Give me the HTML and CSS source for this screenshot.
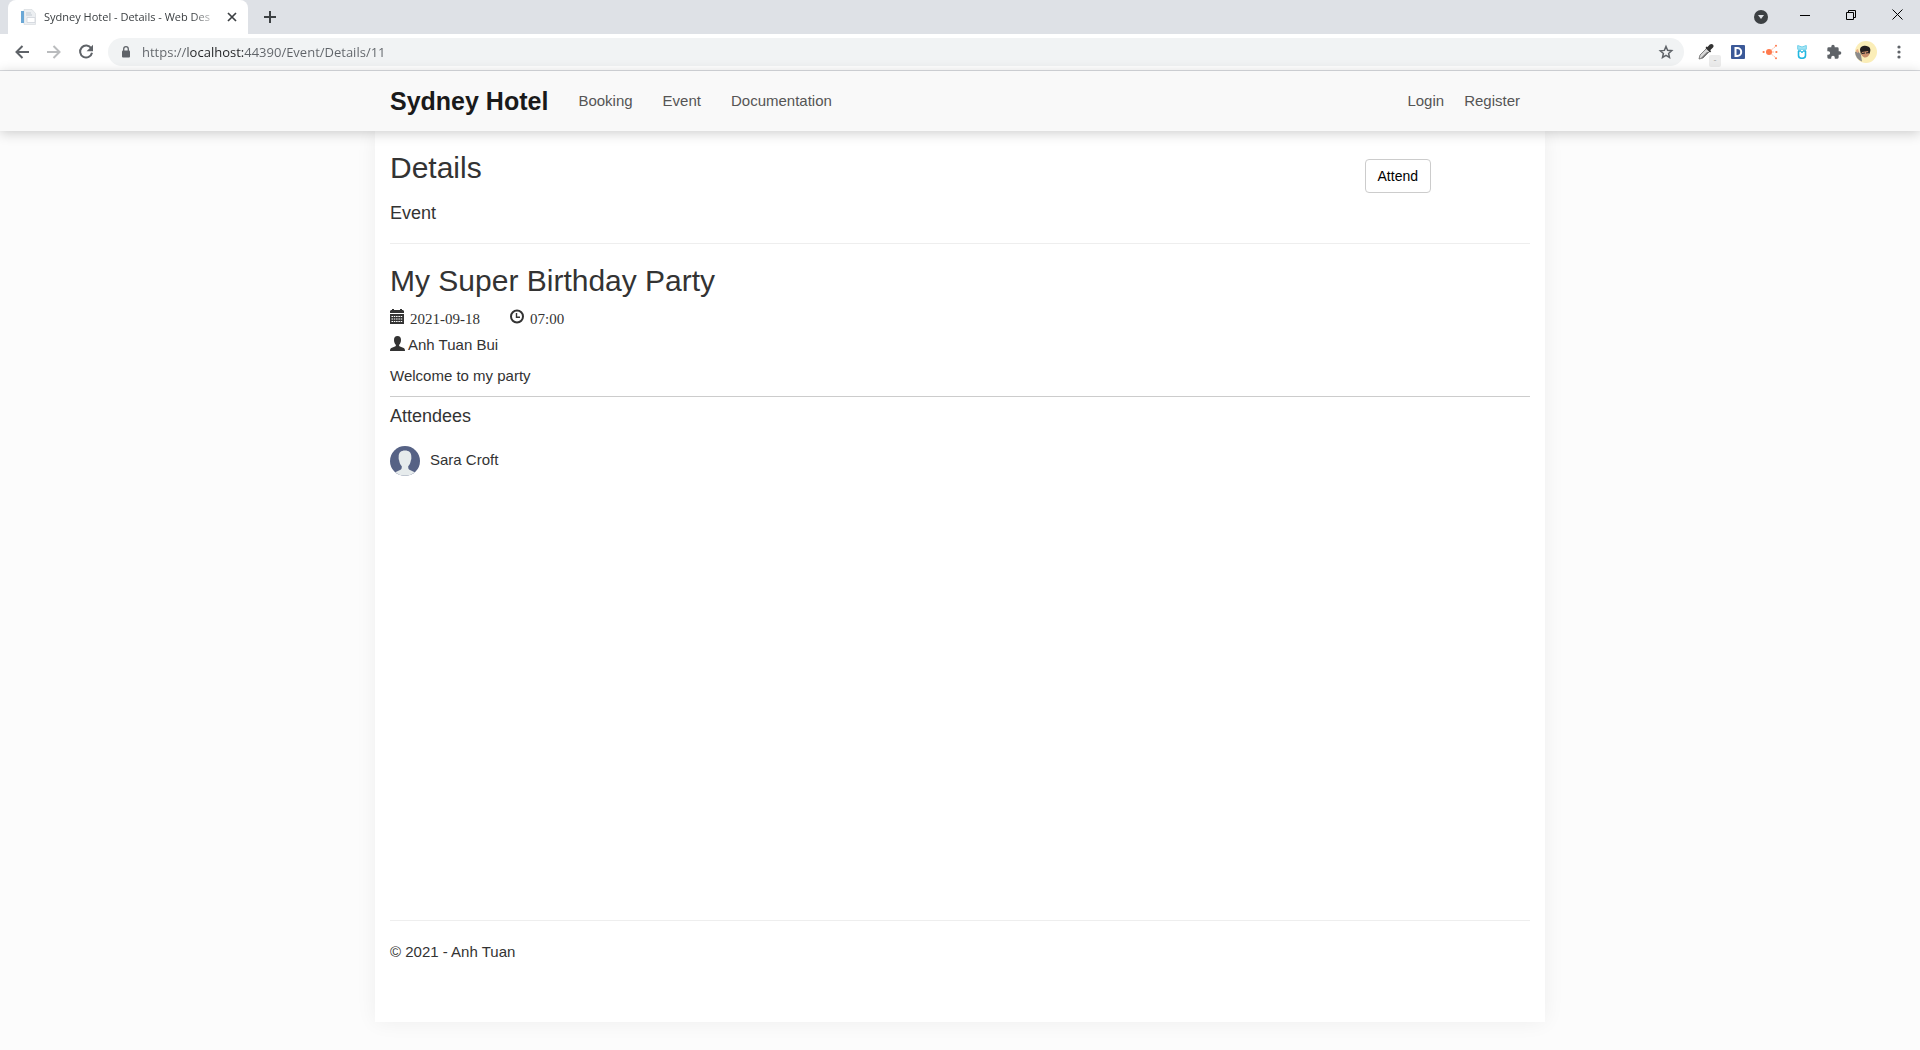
FILE: index.html
```html
<!DOCTYPE html>
<html lang="en">
<head>
<meta charset="utf-8">
<title>Sydney Hotel - Details - Web Design</title>
<link rel="stylesheet" href="styles.css">
</head>
<body>
<div class="browser">
  <div class="tab-strip">
    <div class="tab">
      <svg class="favicon" width="16" height="16" viewBox="0 0 16 16" aria-hidden="true"><path fill="#eceff2" stroke="#d3d7db" stroke-width=".6" d="M4 .5h8l3.500 4V15.500H4z"/><path fill="#6ba8d6" d="M1 2h3v12H1z"/><path fill="#fff" stroke="#cfd3da" stroke-width=".8" d="M7 8.500h8v5H7z"/><path stroke="#c3cbd3" d="M6 4h5M6 6h6"/></svg>
      <span class="tab-title">Sydney Hotel - Details - Web Des</span>
      <button class="icon-button tab-close" aria-label="Close tab"><svg width="10" height="10" viewBox="0 0 10 10"><path d="M1 1l8 8M9 1L1 9" stroke="#3c4043" stroke-width="1.700"/></svg></button>
    </div>
    <button class="icon-button new-tab" aria-label="New tab"><svg width="12" height="12" viewBox="0 0 12 12"><path d="M6 0v12M0 6h12" stroke="#3c4043" stroke-width="2"/></svg></button>
    <div class="window-controls">
      <button class="icon-button tab-search" aria-label="Search tabs"><svg width="14" height="14" viewBox="0 0 14 14"><circle cx="7" cy="7" r="7" fill="#3c4043"/><path d="M4 5h6L7 9z" fill="#dee1e6"/></svg></button>
      <button class="icon-button" aria-label="Minimize"><svg width="10" height="10" viewBox="0 0 10 10"><path d="M0 5.500h10" stroke="#000"/></svg></button>
      <button class="icon-button" aria-label="Restore"><svg width="10" height="10" viewBox="0 0 10 10" fill="none" stroke="#000"><path d="M.5 2.500h7v7h-7zM2.500 2.500v-2h7v7h-2"/></svg></button>
      <button class="icon-button" aria-label="Close"><svg width="11" height="11" viewBox="0 0 11 11"><path d="M.5.5l10 10M10.500.5l-10 10" stroke="#000"/></svg></button>
    </div>
  </div>
  <div class="toolbar">
    <div class="history">
      <button class="icon-button" aria-label="Back"><svg width="16" height="16" viewBox="0 0 16 16" fill="none" stroke="#5f6368" stroke-width="2"><path d="M8.500 2L2.500 8L8.500 14M2.500 8H15"/></svg></button>
      <button class="icon-button" aria-label="Forward"><svg width="16" height="16" viewBox="0 0 16 16" fill="none" stroke="#babcbe" stroke-width="2"><path d="M7.500 2L13.500 8L7.500 14M13.500 8H1"/></svg></button>
      <button class="icon-button" aria-label="Reload"><svg width="16" height="16" viewBox="0 0 16 16"><path d="M13.200 4.300A6 6 0 1 0 14 8.800" fill="none" stroke="#5f6368" stroke-width="2"/><path d="M15 .8v6.400H8.600z" fill="#5f6368"/></svg></button>
    </div>
    <div class="omnibox">
      <svg width="10" height="12" viewBox="0 0 10 12" aria-hidden="true"><path d="M2.700 5V3a2.300 2.300 0 0 1 4.600 0v2" fill="none" stroke="#5f6368" stroke-width="1.300"/><rect x="1" y="4.500" width="8" height="7" rx="1" fill="#5f6368"/></svg>
      <input class="address" type="text" aria-label="Address" value="https://localhost:44390/Event/Details/11">
      <button class="icon-button" aria-label="Bookmark this page"><svg width="16" height="16" viewBox="0 0 16 16"><path d="M8 2.500l1.600 3.800 4.100.4-3.100 2.700.9 4L8 11.300l-3.500 2.200.9-4-3.100-2.700 4.100-.4z" fill="none" stroke="#5f6368" stroke-width="1.500"/></svg></button>
    </div>
    <div class="extensions">
      <button class="icon-button picker" aria-label="Color picker"><svg width="18" height="18" viewBox="0 0 18 18"><path d="M2 16l1-4L10 5l3 3-7 7z" fill="#d8d8d8" stroke="#666" stroke-width=".8"/><path d="M4 15l6-6 2 0-6 6z" fill="#777"/><path d="M8.500 5L13 9.500l1.200-1.200-1-1L16 4.500c1-1 .5-2.300-.2-3s-2-.9-3 .1L10.500 4l-1-.6z" fill="#333"/></svg><span class="picker-badge">-</span></button>
      <button class="icon-button" aria-label="D extension"><svg width="14" height="14" viewBox="0 0 14 14"><rect width="14" height="14" rx="1" fill="#3b5998"/><path fill="none" stroke="#fff" stroke-width="2" d="M4.500 3h1.700a4 4 0 0 1 0 8H4.500z"/></svg></button>
      <button class="icon-button" aria-label="Network extension"><svg width="16" height="16" viewBox="0 0 16 16" fill="#ff7a4d" stroke="#ffb59c"><path fill="none" stroke-dasharray="2 1" d="M1 8h14M7 8l7-6M7 8l7 6"/><g stroke="none"><circle cx="7" cy="8" r="3"/><circle cx="1.500" cy="8" r="1"/><circle cx="14" cy="1.800" r="1"/><circle cx="14.500" cy="8" r="1"/><circle cx="14" cy="14.200" r="1"/></g></svg></button>
      <button class="icon-button" aria-label="Owl extension"><svg width="10" height="14" viewBox="0 0 10 14" fill="none" stroke="#23b8e0"><path d="M.7.5L5 2 9.300.5v3.800H.7z" fill="#a5e4f4" stroke="#6fd0ea"/><path d="M1.500 6v4.500a3.500 2.800 0 0 0 7 0V6M5 6v2M1 6h3M6 6h3" stroke-width="1.600"/></svg></button>
      <button class="icon-button" aria-label="Extensions"><svg width="16" height="16" viewBox="0 0 24 24"><path fill="#5f6368" d="M20.500 11H19V7a2 2 0 0 0-2-2h-4V3.500a2.500 2.500 0 0 0-5 0V5H4a2 2 0 0 0-2 2v3.800h1.500a2.700 2.700 0 0 1 0 5.400H2V20a2 2 0 0 0 2 2h3.800v-1.500a2.700 2.700 0 0 1 5.400 0V22H17a2 2 0 0 0 2-2v-4h1.500a2.500 2.500 0 0 0 0-5z"/></svg></button>
      <button class="icon-button" aria-label="Profile"><svg width="22" height="22" viewBox="0 0 22 22"><circle cx="11" cy="11" r="11" fill="#fbeeb8"/><path d="M0 11l3-1 3 4 1 6.500A11 11 0 0 1 0 11z" fill="#8b8b8b"/><path d="M1 9l2-1 1 3-2 1z" fill="#e7aa82"/><path d="M6 9l8-1 1 4c-1 3-3 4.500-5 4.500S6 14 6 12z" fill="#c98e6c"/><path d="M5 9c0-4 5-5 8-3.500 3 1 3 5 1 7.500l-1-3-6 1-1 3z" fill="#241f1e"/><path d="M7 12.500l3-.5m1 0l3-.5" stroke="#222"/></svg></button>
      <button class="icon-button" aria-label="Menu"><svg width="4" height="16" viewBox="0 0 4 16" fill="#5f6368"><circle cx="2" cy="3" r="1.600"/><circle cx="2" cy="8" r="1.600"/><circle cx="2" cy="13" r="1.600"/></svg></button>
    </div>
  </div>
</div>

<header class="navbar">
  <nav class="container nav-inner">
    <a class="brand" href="#">Sydney Hotel</a>
    <div class="nav-links">
      <a href="#">Booking</a>
      <a href="#">Event</a>
      <a href="#">Documentation</a>
    </div>
    <div class="account-links">
      <a href="#">Login</a>
      <a href="#">Register</a>
    </div>
  </nav>
</header>

<div class="container sheet">
  <main>
    <div class="page-head">
      <div>
        <h2>Details</h2>
        <h4>Event</h4>
      </div>
      <div class="actions"><button class="btn">Attend</button></div>
    </div>
    <hr>
    <h2>My Super Birthday Party</h2>
    <div class="schedule">
      <span class="fact"><svg width="14" height="15" viewBox="0 0 14 15" aria-hidden="true"><path fill="#333" d="M0 4V2l1-1h1V0h2v1h6V0h2v1h1l1 1v2zM0 5h14v10H0z"/><path stroke="#fff" stroke-width="1" stroke-dasharray="1.500 .8" d="M1.500 7.500h11.300M1.500 10h11.300M1.500 12.500h11.300"/></svg><time>2021-09-18</time></span>
      <span class="fact"><svg width="14" height="15" viewBox="0 0 14 15" fill="none" stroke="#333" aria-hidden="true"><circle cx="7" cy="7.500" r="6" stroke-width="2"/><path stroke-width="1.400" d="M6.500 4v4.200h3.500"/></svg><time>07:00</time></span>
    </div>
    <div class="host"><svg width="15" height="15" viewBox="0 0 15 15" aria-hidden="true"><path fill="#333" d="M7.500 0C5.200 0 4 1.500 4 4c0 2.200.8 3.800 1.800 4.800.3.900 0 1.400-.8 1.700L1.300 12C.3 12.500 0 13.500 0 15h15c0-1.500-.3-2.500-1.300-3L10 10.500c-.8-.3-1.100-.8-.8-1.700C10.200 7.800 11 6.200 11 4c0-2.500-1.200-4-3.500-4z"/></svg><span>Anh Tuan Bui</span></div>
    <p class="description">Welcome to my party</p>
    <section class="attendees">
      <h4>Attendees</h4>
      <div class="attendee">
        <svg width="30" height="30" viewBox="0 0 30 30" aria-hidden="true"><circle cx="15" cy="15" r="15" fill="#566285"/><path fill="#e6ebec" d="M15 4.500c-4 0-6.300 2-6.300 6 0 1-.3 3 .4 3.700.4 2.500 1.200 4.500 2.700 6 0 2-.2 3.200-1.800 3.800L5.300 26.300a15 15 0 0 0 19.400 0L20 24c-1.600-.6-1.800-1.800-1.800-3.800 1.500-1.500 2.300-3.500 2.700-6 .7-.7.400-2.700.4-3.700 0-4-2.300-6-6.300-6z"/></svg>
        <span>Sara Croft</span>
      </div>
    </section>
  </main>
  <footer>
    <hr>
    <p>© 2021 - Anh Tuan</p>
  </footer>
</div>
</body>
</html>
```

FILE: styles.css
```css
* { box-sizing: border-box; }

body {
  margin: 0;
  min-height: 100vh;
  display: flex;
  flex-direction: column;
  background: #fcfcfc;
  color: #333;
  font: 15px/20px "Liberation Sans", Arial, sans-serif;
}

svg { display: block; flex: none; }

h2, h4, p { margin: 0; font-weight: 400; }
h2 { font-size: 30px; line-height: 33px; }
h4 { font-size: 18px; line-height: 20px; }

hr {
  margin: 0;
  border: 0;
  border-top: 1px solid #eee;
}

a { color: #555; text-decoration: none; }

/* Browser frame */
.browser {
  border-bottom: 1px solid #dadce0;
  background: #fff;
  font-family: "Open Sans", "Segoe UI", sans-serif;
}

.icon-button {
  display: grid;
  place-items: center;
  padding: 0;
  border: 0;
  background: none;
}

.tab-strip {
  display: flex;
  height: 34px;
  padding-left: 8px;
  background: #dee1e6;
}

.tab {
  display: flex;
  align-items: center;
  width: 240px;
  padding: 0 11px 0 12px;
  border-radius: 8px 8px 0 0;
  background: #fff;
}

.tab-title {
  flex: 1;
  margin: 0 8px;
  white-space: nowrap;
  color: #3c4043;
  font-size: 11px;
  mask-image: linear-gradient(to right, #000 85%, transparent);
}

.new-tab { width: 44px; }

.window-controls {
  display: flex;
  margin-left: auto;
  padding-bottom: 5px;
}

.window-controls .icon-button { width: 46px; }
.window-controls .tab-search { width: 42px; padding-top: 5px; }

.toolbar {
  display: flex;
  align-items: center;
  height: 36px;
  padding: 0 15px 0 14px;
}

.history { display: flex; gap: 16px; margin-right: 14px; }

.omnibox {
  flex: 1;
  display: flex;
  align-items: center;
  height: 28px;
  padding: 0 10px 0 13px;
  border-radius: 14px;
  background: #f1f3f4;
}

.address {
  flex: 1;
  min-width: 0;
  margin-left: 11px;
  padding: 0;
  border: 0;
  outline: 0;
  font: 13px/20px "Open Sans", "Segoe UI", sans-serif;
  /* The host part of the URL is darker than the rest */
  color: transparent;
  background: linear-gradient(to right, #5f6368 46px, #202124 46px, #202124 102px, #5f6368 102px);
  background-clip: text;
}

.extensions { display: flex; align-items: center; margin-left: 6px; }
.extensions .icon-button { width: 32px; height: 28px; }
.extensions .icon-button:last-child { width: 34px; margin-right: -11px; }

.picker { position: relative; }

.picker-badge {
  position: absolute;
  right: 1px;
  bottom: -1px;
  width: 12px;
  height: 12px;
  border-radius: 2px;
  background: #ececec;
  color: #aaa;
  font-size: 9px;
  line-height: 11px;
}

/* Site */
.container {
  width: 100%;
  max-width: 1170px;
  margin: 0 auto;
  padding: 0 15px;
}

.navbar {
  position: relative;
  background: #f9f9f9;
  box-shadow: 0 2px 12px rgba(0, 0, 0, .2);
}

.nav-inner { display: flex; align-items: center; height: 60px; }

.brand {
  margin-right: 30px;
  color: #1a1a1a;
  font-size: 25px;
  font-weight: 700;
}

.nav-links { display: flex; gap: 30px; }

.account-links {
  display: flex;
  gap: 20px;
  margin-left: auto;
  padding-right: 10px;
}

.sheet {
  flex: 1;
  display: flex;
  flex-direction: column;
  margin-bottom: 28px;
  padding-top: 20px;
  background: #fff;
  box-shadow: 0 0 20px rgba(0, 0, 0, .06);
}

main { flex: 1; }

.page-head {
  display: flex;
  justify-content: space-between;
  margin-bottom: 20px;
}

.page-head h4 { margin-top: 19px; }
.actions { padding: 8px 99px 0 0; }

.btn {
  padding: 6px 12px;
  border: 1px solid #ccc;
  border-radius: 4px;
  background: #fff;
  color: #000;
  font: 14px/20px "Liberation Sans", Arial, sans-serif;
}

main > h2 { margin-top: 20px; }

.schedule {
  display: flex;
  gap: 30px;
  margin-top: 10px;
  font-family: "Liberation Serif", "Times New Roman", serif;
}

.fact { display: flex; gap: 6px; }
.fact svg { margin-top: 2px; }
.fact time { padding-top: 2px; }

.host { display: flex; gap: 3px; margin-top: 6px; }
.host svg { margin-top: 1px; }

.description { margin-top: 11px; }

.attendees {
  margin-top: 10px;
  padding-top: 9px;
  border-top: 1px solid #ccc;
}

.attendee {
  display: flex;
  gap: 10px;
  margin-top: 20px;
}

.attendee span { padding-top: 4px; }

footer p { padding: 21px 0 60px; }
```
